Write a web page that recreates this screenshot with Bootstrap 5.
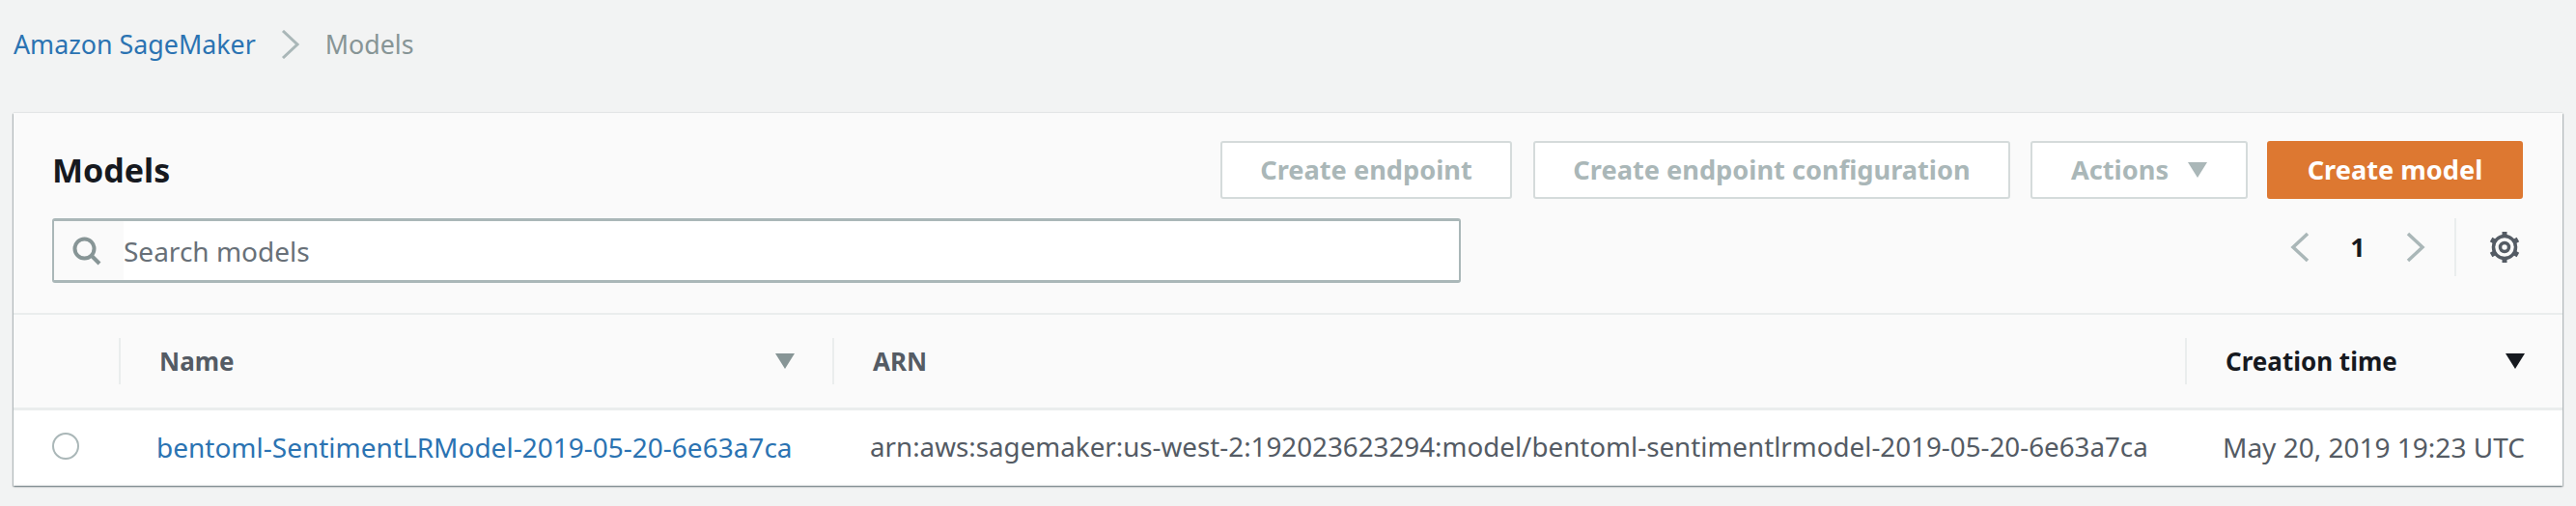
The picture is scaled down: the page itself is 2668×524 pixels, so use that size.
<!DOCTYPE html>
<html lang="en">
<head>
<meta charset="utf-8">
<title>Models</title>
<link href="https://cdn.jsdelivr.net/npm/bootstrap@5.3.0/dist/css/bootstrap.min.css" rel="stylesheet">
<style>
body{background:#f2f3f3;font-family:"Noto Sans",sans-serif;font-size:28px;color:#545b64;padding:0 14px;height:524px;overflow:hidden}
.crumbs{height:117px;padding-top:27px;line-height:38px;gap:26px;font-size:26.8px}
.crumbs a{color:#2b73b2;text-decoration:none}
.crumb-now{color:#879596}
.panel{background:#fafafa;box-shadow:0 1px 2px 0 rgba(0,28,36,.4),1px 1px 1px 0 rgba(0,28,36,.15),-1px 1px 1px 0 rgba(0,28,36,.15),0 -1px 1px 0 rgba(0,28,36,.03);height:386px}
.panel-head{height:209px;border-bottom:2px solid #eaeded;padding:29px 41px 0 41px}
.panel-title{font-size:34px;font-weight:700;color:#16191f;line-height:60px;margin:0 0 0 -1px}
.act{height:60px;font-size:27.2px;font-weight:700;border:2px solid #d5dbdb;background:#fff;color:#aab7b8;border-radius:3px;padding:0;display:flex;align-items:center;justify-content:center;gap:20px}
.act-a{width:302px;margin-right:22px}.act-b{width:494px;margin-right:21px}.act-c{width:225px;margin-right:20px}
.act-d{width:265px;background:#dd7831;border-color:#dd7831;color:#fff}
.search-row{margin-top:20px;height:67px}
.searchbox{width:1459px;height:67px;border:2px solid #aab7b8;border-top-width:3px;border-bottom-width:3px;border-radius:3px;background:#fff;overflow:hidden;margin-left:-1px}
.search-ico{width:72px;background:#fafafa;padding-left:19px}
.search-txt{color:#687078;font-size:28px}
.pager{height:60px;margin-right:2px}
.pager-num{color:#16191f;font-weight:700;font-size:27px;width:100px;text-align:center}
.pager-sep{width:2px;height:60px;background:#eaeded;margin:0 33px 0 30px}
.grid-t{table-layout:fixed;width:100%;margin:0;--bs-table-bg:transparent}
.grid-t th{height:97px;padding:0;font-weight:700;vertical-align:middle;border-bottom:3px solid #eaeded;font-size:26px;color:#545b64}
.grid-t td{height:78px;padding:0;vertical-align:middle;background:#fff;border:0;color:#545b64;font-size:28px}
.th-in{height:48px;border-left:2px solid #eaeded;padding-left:40px;padding-right:39px;line-height:48px}
.t-dark{color:#16191f}
.radio-o{width:28px;height:28px;border:2px solid #aab7b8;border-radius:50%;margin-left:40px;margin-top:-2px}
.grid-t a{color:#2b73b2;text-decoration:none}
.cell-a{padding-left:39px!important;white-space:nowrap}
.grid-t td.cell-b{padding-left:39px;white-space:nowrap;font-size:27.75px}
.cell-c{padding-left:39px!important;white-space:nowrap}
</style>
</head>
<body>
<nav class="crumbs d-flex align-items-start">
  <a href="#">Amazon SageMaker</a>
  <svg width="20" height="30" viewBox="0 0 20 30" class="mt-1" aria-hidden="true"><path d="M2 1l15 14L2 29" fill="none" stroke="#aab7b8" stroke-width="3"/></svg>
  <span class="crumb-now">Models</span>
</nav>
<section class="panel">
  <div class="panel-head">
    <div class="d-flex align-items-center">
      <h1 class="panel-title flex-grow-1">Models</h1>
      <button class="act act-a" type="button">Create endpoint</button>
      <button class="act act-b" type="button">Create endpoint configuration</button>
      <button class="act act-c" type="button">Actions
        <svg width="20" height="16" viewBox="0 0 20 16" aria-hidden="true"><path d="M0 0h20L10 16z" fill="#aab7b8"/></svg>
      </button>
      <button class="act act-d" type="button">Create model</button>
    </div>
    <div class="search-row d-flex justify-content-between align-items-start">
      <div class="searchbox d-flex align-items-stretch">
        <div class="search-ico d-flex align-items-center">
          <svg width="30" height="30" viewBox="0 0 30 30" aria-hidden="true"><circle cx="12.500" cy="12.500" r="10" fill="none" stroke="#879596" stroke-width="4"/><path d="M19.500 19.500L28 28" stroke="#879596" stroke-width="4" fill="none"/></svg>
        </div>
        <div class="search-txt d-flex align-items-center">Search models</div>
      </div>
      <div class="pager d-flex align-items-center">
        <svg width="20" height="32" viewBox="0 0 20 32" aria-hidden="true"><path d="M18 2L3 16l15 14" fill="none" stroke="#aab7b8" stroke-width="3.500"/></svg>
        <span class="pager-num">1</span>
        <svg width="20" height="32" viewBox="0 0 20 32" aria-hidden="true"><path d="M2 2l15 14L2 30" fill="none" stroke="#aab7b8" stroke-width="3.500"/></svg>
        <span class="pager-sep"></span>
        <svg width="34" height="34" viewBox="0 0 34 34" aria-hidden="true"><circle cx="17" cy="17" r="4.500" fill="none" stroke="#545b64" stroke-width="3.500"/><circle cx="17" cy="17" r="11.500" fill="none" stroke="#545b64" stroke-width="3.500"/><g stroke="#545b64" stroke-width="5"><path d="M17 1v5M17 28v5M3.100 9l4.300 2.500M26.600 22.500l4.300 2.500M3.100 25l4.300-2.500M26.600 11.500L30.900 9"/></g></svg>
      </div>
    </div>
  </div>
  <table class="table grid-t">
    <colgroup><col style="width:109px"><col style="width:739px"><col style="width:1401px"><col style="width:391px"></colgroup>
    <thead>
      <tr>
        <th></th>
        <th><div class="th-in d-flex justify-content-between align-items-center"><span>Name</span><svg width="20" height="16" viewBox="0 0 20 16" aria-hidden="true"><path d="M0 0h20L10 16z" fill="#879596"/></svg></div></th>
        <th><div class="th-in">ARN</div></th>
        <th><div class="th-in t-dark d-flex justify-content-between align-items-center"><span>Creation time</span><svg width="20" height="16" viewBox="0 0 20 16" aria-hidden="true"><path d="M0 0h20L10 16z" fill="#16191f"/></svg></div></th>
      </tr>
    </thead>
    <tbody>
      <tr>
        <td><div class="radio-o"></div></td>
        <td class="cell-a"><a href="#">bentoml-SentimentLRModel-2019-05-20-6e63a7ca</a></td>
        <td class="cell-b">arn:aws:sagemaker:us-west-2:192023623294:model/bentoml-sentimentlrmodel-2019-05-20-6e63a7ca</td>
        <td class="cell-c">May 20, 2019 19:23 UTC</td>
      </tr>
    </tbody>
  </table>
</section>
</body>
</html>
